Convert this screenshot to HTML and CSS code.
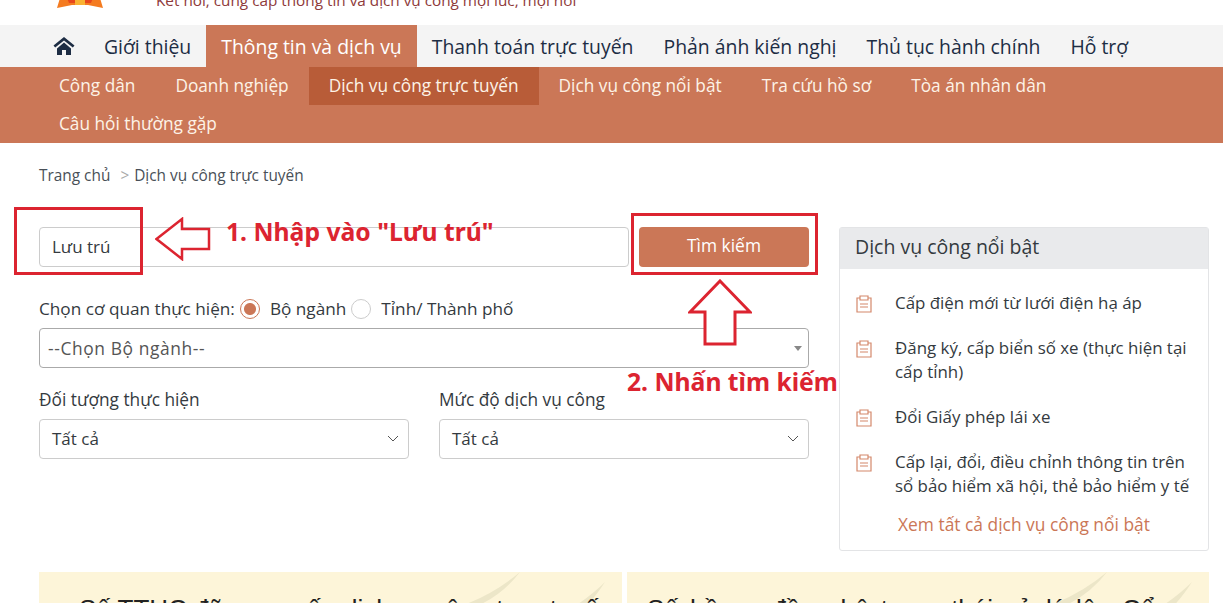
FILE: index.html
```html
<!DOCTYPE html>
<html>
<head>
  <title>Dịch vụ công trực tuyến</title>
  <link rel="stylesheet" href="styles.css">
</head>
<body>
  <header class="top">
    <svg class="logo" width="46" height="10" viewBox="0 0 46 10">
      <path d="M0 10 L3 0 L43 0 L46 10 L31 7 L15 7 Z" fill="#f47b20"/>
      <path d="M10 0 H36 L34 5 H12 Z" fill="#e8481c"/>
      <rect x="18" y="1" width="10" height="6" fill="#f9b233"/>
    </svg>
    <p class="slogan">Kết nối, cung cấp thông tin và dịch vụ công mọi lúc, mọi nơi</p>
  </header>

  <nav class="mainnav">
    <a class="home" href="#">
      <svg width="22" height="20" viewBox="0 0 22 20"><path d="M11 1 L0.500 9.600 L2.200 11.600 L11 4.400 L19.800 11.600 L21.500 9.600 Z M4 12.400 L11 6.400 L18 12.400 L18 19 L13 19 L13 14 L9 14 L9 19 L4 19 Z" fill="#1d2d44"/></svg>
    </a>
    <a href="#">Giới thiệu</a>
    <a class="active" href="#">Thông tin và dịch vụ</a>
    <a href="#">Thanh toán trực tuyến</a>
    <a href="#">Phản ánh kiến nghị</a>
    <a href="#">Thủ tục hành chính</a>
    <a href="#">Hỗ trợ</a>
  </nav>

  <nav class="subnav">
    <a href="#">Công dân</a>
    <a href="#">Doanh nghiệp</a>
    <a class="active" href="#">Dịch vụ công trực tuyến</a>
    <a href="#">Dịch vụ công nổi bật</a>
    <a href="#">Tra cứu hồ sơ</a>
    <a href="#">Tòa án nhân dân</a>
    <a href="#">Câu hỏi thường gặp</a>
  </nav>

  <div class="breadcrumb">
    <a href="#">Trang chủ</a><span class="sep">&gt;</span><a href="#">Dịch vụ công trực tuyến</a>
  </div>

  <div class="content">
    <main class="search">
      <div class="search-row">
        <div class="field input">Lưu trú</div>
        <button class="btn">Tìm kiếm</button>
      </div>
      <div class="radio-row">
        <span>Chọn cơ quan thực hiện:</span>
        <span class="radio checked"></span><span>Bộ ngành</span>
        <span class="radio"></span><span>Tỉnh/ Thành phố</span>
      </div>
      <div class="field select dark">--Chọn Bộ ngành--<span class="caret"></span></div>
      <div class="filters">
        <div>
          <label>Đối tượng thực hiện</label>
          <div class="field select">Tất cả
            <svg class="chev" width="12" height="7" viewBox="0 0 12 7"><path d="M1 1 L6 6 L11 1" fill="none" stroke="#555" stroke-width="1"/></svg>
          </div>
        </div>
        <div>
          <label>Mức độ dịch vụ công</label>
          <div class="field select">Tất cả
            <svg class="chev" width="12" height="7" viewBox="0 0 12 7"><path d="M1 1 L6 6 L11 1" fill="none" stroke="#555" stroke-width="1"/></svg>
          </div>
        </div>
      </div>
    </main>

    <aside class="side">
      <h3>Dịch vụ công nổi bật</h3>
      <ul>
        <li><svg class="doc" width="16" height="18" viewBox="0 0 16 18"><path d="M4 3 H1 V17 H15 V3 H12 M4 1 H12 V5 H4 Z M4 9 H12 M4 12 H12" fill="none" stroke="#d4886b" stroke-width="1.200"/></svg>Cấp điện mới từ lưới điện hạ áp</li>
        <li><svg class="doc" width="16" height="18" viewBox="0 0 16 18"><path d="M4 3 H1 V17 H15 V3 H12 M4 1 H12 V5 H4 Z M4 9 H12 M4 12 H12" fill="none" stroke="#d4886b" stroke-width="1.200"/></svg>Đăng ký, cấp biển số xe (thực hiện tại cấp tỉnh)</li>
        <li><svg class="doc" width="16" height="18" viewBox="0 0 16 18"><path d="M4 3 H1 V17 H15 V3 H12 M4 1 H12 V5 H4 Z M4 9 H12 M4 12 H12" fill="none" stroke="#d4886b" stroke-width="1.200"/></svg>Đổi Giấy phép lái xe</li>
        <li><svg class="doc" width="16" height="18" viewBox="0 0 16 18"><path d="M4 3 H1 V17 H15 V3 H12 M4 1 H12 V5 H4 Z M4 9 H12 M4 12 H12" fill="none" stroke="#d4886b" stroke-width="1.200"/></svg>Cấp lại, đổi, điều chỉnh thông tin trên sổ bảo hiểm xã hội, thẻ bảo hiểm y tế</li>
      </ul>
      <a class="more" href="#">Xem tất cả dịch vụ công nổi bật</a>
    </aside>
  </div>

  <div class="stats">
    <div class="stat">
      <svg class="swoosh" width="180" height="40" viewBox="0 0 180 40"><path d="M0 40 Q45 28 78 0 Q55 30 18 40 Z M124 40 Q148 25 163 10 Q150 30 138 40 Z" fill="#ece6c8"/></svg>
      <p>Số TTHC đã cung cấp dịch vụ công trực tuyến</p>
    </div>
    <div class="stat">
      <svg class="swoosh" width="180" height="40" viewBox="0 0 180 40"><path d="M0 40 Q45 28 78 0 Q55 30 18 40 Z M124 40 Q148 25 163 10 Q150 30 138 40 Z" fill="#ece6c8"/></svg>
      <p>Số hồ sơ đồng bộ trạng thái xử lý lên Cổng</p>
    </div>
  </div>

  <!-- chu thich mau do ve de len anh chup -->
  <div class="mark mark-input"></div>
  <div class="mark mark-btn"></div>
  <svg class="arrow arrow-left" width="56" height="44" viewBox="0 0 56 44"><path d="M1.500 22 L27 2 L27 12 L54 12 L54 32 L27 32 L27 42 Z" fill="#fff" stroke="#dc2430" stroke-width="2.500"/></svg>
  <svg class="arrow arrow-up" width="64" height="68" viewBox="0 0 64 68"><path d="M32 2 L62 33 L47 33 L47 65 L17 65 L17 33 L2 33 Z" fill="#fff" stroke="#dc2430" stroke-width="3"/></svg>
  <span class="note note-1">1. Nhập vào "Lưu trú"</span>
  <span class="note note-2">2. Nhấn tìm kiếm</span>
</body>
</html>
```
FILE: styles.css
```css
html, body {
  height: 603px;
  overflow: hidden;
}

body {
  margin: 0;
  position: relative;
  font-family: "Open Sans", "Noto Sans", sans-serif;
  font-size: 17px;
  color: #343a40;
  background-color: #fff;
}

a {
  color: inherit;
  text-decoration: none;
}

.top {
  height: 25px;
  overflow: hidden;
  position: relative;
}

.logo {
  position: absolute;
  left: 57px;
  top: -2px;
}

.slogan {
  position: absolute;
  left: 156px;
  bottom: 16px;
  margin: 0;
  font-size: 15.3px;
  line-height: 18px;
  color: #8e3a3a;
  white-space: nowrap;
}

.mainnav {
  display: flex;
  height: 42px;
  padding-left: 38px;
  background-color: #f4f4f4;
  font-size: 19.4px;
  line-height: 44px;
  color: #1d2d44;
}

.mainnav a {
  padding: 0 15px;
}

.mainnav .home {
  display: flex;
  align-items: center;
  padding-right: 14px;
}

.mainnav .active {
  background-color: #cb7757;
  color: #fff;
}

.subnav {
  display: flex;
  flex-wrap: wrap;
  height: 76px;
  padding-left: 39px;
  padding-right: 100px;
  background-color: #cb7757;
  color: #fdf3e7;
  font-size: 17.25px;
  line-height: 37px;
}

.subnav a {
  padding: 0 20px;
  height: 38px;
}

.subnav .active {
  background-color: #b85c38;
}

.breadcrumb {
  padding: 23px 39px 0;
  font-size: 15.4px;
  line-height: 20px;
  color: #495057;
}

.sep {
  margin: 0 5px 0 10px;
  color: #aaa;
}

.content {
  display: flex;
  gap: 30px;
  padding: 0 14px 0 39px;
  margin-top: 41px;
}

.search {
  width: 770px;
}

.side {
  width: 370px;
  height: 324px;
  box-sizing: border-box;
  border: 1px solid #e3e4e6;
  border-radius: 3px;
}

.side h3 {
  margin: 0;
  height: 41px;
  padding-left: 15px;
  background-color: #e9eaec;
  font-size: 19.5px;
  font-weight: 400;
  line-height: 38px;
}

.side ul {
  list-style: none;
  margin: 0;
  padding: 22px 15px 0 15px;
  font-size: 16.9px;
  line-height: 24px;
}

.side li {
  position: relative;
  padding-left: 40px;
  margin-bottom: 21px;
}

.doc {
  position: absolute;
  left: 1px;
  top: 4px;
}

.more {
  display: block;
  margin-top: -7px;
  padding-left: 58px;
  font-size: 17.4px;
  line-height: 24px;
  color: #cb7757;
}

.search-row {
  display: flex;
  gap: 10px;
}

.field {
  box-sizing: border-box;
  height: 40px;
  padding: 0 12px;
  border: 1px solid #ccc;
  border-radius: 4px;
  line-height: 38px;
  position: relative;
  color: #343a40;
}

.input {
  flex: 1;
}

.btn {
  width: 170px;
  height: 40px;
  padding-bottom: 5px;
  border: 0;
  border-radius: 4px;
  background-color: #cb7757;
  color: #fff;
  font-family: inherit;
  font-size: 17.4px;
}

.radio-row {
  display: flex;
  align-items: center;
  margin-top: 31px;
  height: 22px;
  line-height: 22px;
  font-size: 17.2px;
}

.radio {
  box-sizing: border-box;
  width: 20px;
  height: 20px;
  margin: 0 10px 0 5px;
  border: 1px solid #ccc;
  border-radius: 50%;
}

.radio.checked {
  border-color: #cb7757;
  background: radial-gradient(circle, #cb7757 0 5.5px, #fff 6.5px);
}

.dark {
  margin-top: 8px;
  border-color: #aaa;
  padding-left: 8px;
  color: #555;
  font-size: 17.4px;
  letter-spacing: 0.6px;
}

.caret {
  position: absolute;
  right: 6px;
  top: 17px;
  border-left: 4px solid transparent;
  border-right: 4px solid transparent;
  border-top: 5px solid #888;
}

.filters {
  display: grid;
  grid-template-columns: 370px 370px;
  gap: 30px;
  margin-top: 20px;
}

.filters label {
  display: block;
  height: 31px;
  line-height: 24px;
  font-size: 17.3px;
}

.chev {
  position: absolute;
  right: 9px;
  top: 15px;
}

.stats {
  position: absolute;
  top: 572px;
  left: 39px;
  width: 1170px;
  display: flex;
  gap: 5px;
}

.stat {
  position: relative;
  height: 120px;
  background-color: #fdf5d9;
  overflow: hidden;
}

.stat:first-child {
  width: 583px;
}

.stat:last-child {
  flex: 1;
}

.swoosh {
  position: absolute;
  top: 0;
  right: 0;
}

.stat p {
  position: relative;
  margin: 22px 0 0 40px;
  font-family: "Liberation Sans", sans-serif;
  font-size: 26px;
  line-height: 30px;
  color: #222;
  white-space: nowrap;
}

.stat:last-child p {
  margin-left: 20px;
  word-spacing: 4px;
}

.mark {
  position: absolute;
  box-sizing: border-box;
  border: 3px solid #dc2430;
}

.mark-input {
  left: 14px;
  top: 207px;
  width: 129px;
  height: 68px;
}

.mark-btn {
  left: 631px;
  top: 213px;
  width: 187px;
  height: 62px;
}

.arrow {
  position: absolute;
}

.arrow-left {
  left: 155px;
  top: 217px;
}

.arrow-up {
  left: 688px;
  top: 279px;
}

.note {
  position: absolute;
  font-family: "Noto Sans", sans-serif;
  font-size: 24.7px;
  font-weight: 700;
  line-height: 30px;
  color: #dc2430;
  white-space: nowrap;
}

.note-1 {
  left: 226px;
  top: 217px;
}

.note-2 {
  left: 627px;
  top: 367px;
}
```
